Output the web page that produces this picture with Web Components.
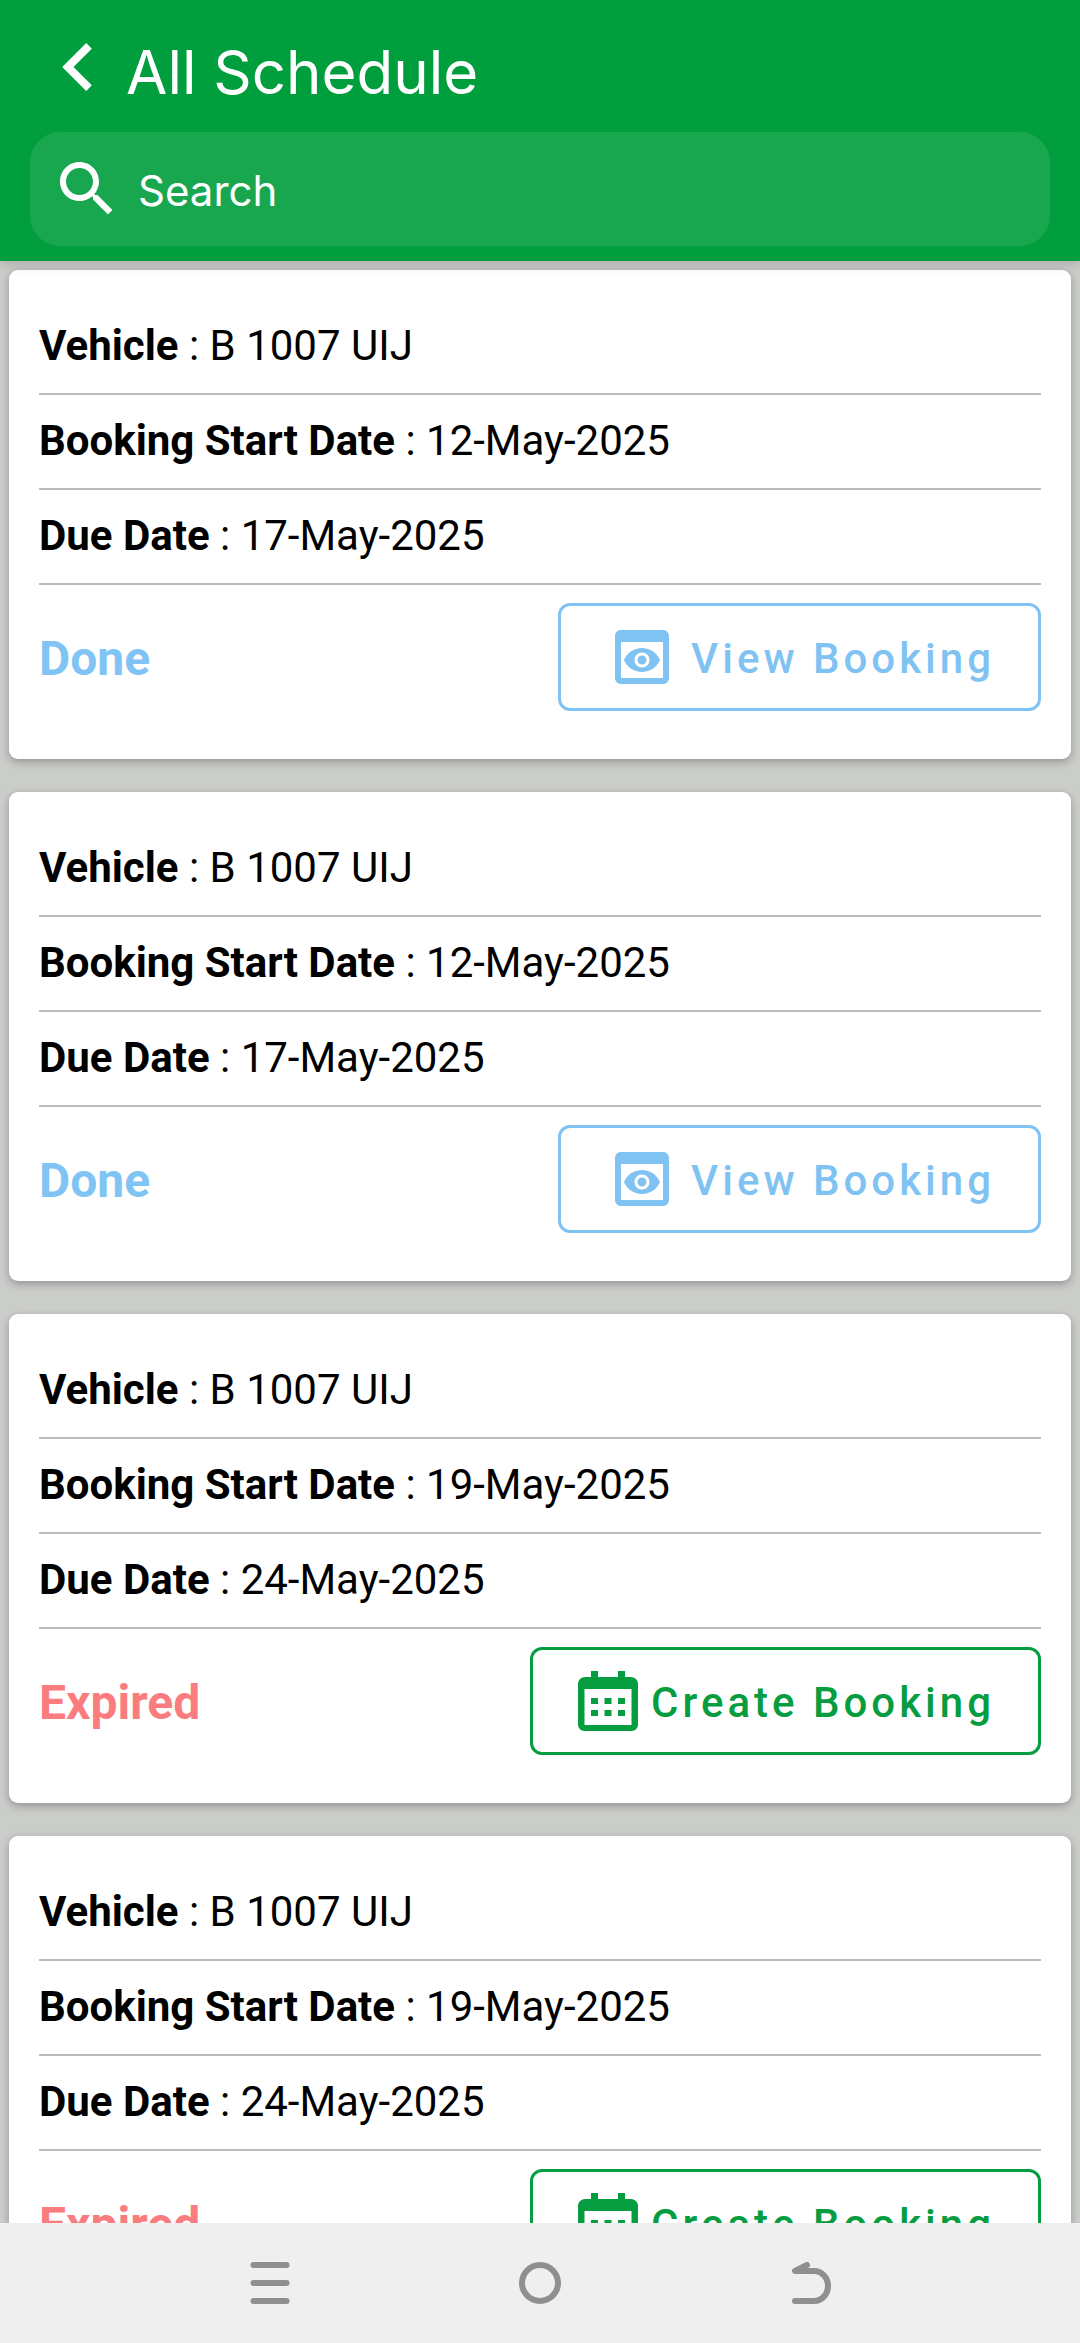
<!DOCTYPE html>
<html lang="en">
<head>
<meta charset="utf-8">
<meta name="viewport" content="width=device-width, initial-scale=1">
<title>All Schedule</title>
<style>
  html, body { margin: 0; height: 100%; }
  body { font-family: Roboto, "Liberation Sans", sans-serif; color: #000; }
</style>
</head>
<body>
<schedule-app>
  <app-header slot="header" heading="All Schedule"></app-header>
  <schedule-card status="done">
    <schedule-field label="Vehicle">B 1007 UIJ</schedule-field>
    <schedule-field label="Booking Start Date">12-May-2025</schedule-field>
    <schedule-field label="Due Date">17-May-2025</schedule-field>
  </schedule-card>
  <schedule-card status="done">
    <schedule-field label="Vehicle">B 1007 UIJ</schedule-field>
    <schedule-field label="Booking Start Date">12-May-2025</schedule-field>
    <schedule-field label="Due Date">17-May-2025</schedule-field>
  </schedule-card>
  <schedule-card status="expired">
    <schedule-field label="Vehicle">B 1007 UIJ</schedule-field>
    <schedule-field label="Booking Start Date">19-May-2025</schedule-field>
    <schedule-field label="Due Date">24-May-2025</schedule-field>
  </schedule-card>
  <schedule-card status="expired">
    <schedule-field label="Vehicle">B 1007 UIJ</schedule-field>
    <schedule-field label="Booking Start Date">19-May-2025</schedule-field>
    <schedule-field label="Due Date">24-May-2025</schedule-field>
  </schedule-card>
  <system-nav slot="nav"></system-nav>
</schedule-app>

<script>
const mount = (host, html) => {
  host.attachShadow({ mode: 'open' }).innerHTML = html;
};

customElements.define('schedule-app', class extends HTMLElement {
  constructor() {
    super();
    mount(this, `
      <style>
        :host { display: flex; flex-direction: column; height: 100vh; background: #cbcdca; }
        main {
          flex: 1; min-height: 0; overflow: hidden;
          display: flex; flex-direction: column; gap: 33px;
          padding: 9px 9px 0;
        }
      </style>
      <slot name="header"></slot>
      <main><slot></slot></main>
      <slot name="nav"></slot>`);
  }
});

customElements.define('app-header', class extends HTMLElement {
  constructor() {
    super();
    mount(this, `
      <style>
        :host {
          display: flex; flex-direction: column; flex: none; position: relative;
          padding: 36px 30px 15px; background: #009e3c; color: #fff;
          font-family: Inter, Roboto, sans-serif;
          box-shadow: 0 2px 12px rgba(0, 0, 0, .18);
        }
        .bar { display: flex; align-items: flex-start; padding: 0 32px; margin-bottom: 24px; gap: 34px; }
        button { border: 0; padding: 7px 0 0; background: none; color: inherit; display: flex; }
        .back svg { width: 30px; height: 48px; }
        h1 { margin: 0; font-size: 60px; line-height: 72px; font-weight: 400; }
        label {
          display: flex; align-items: center; gap: 15px; height: 114px;
          padding: 0 21px; border-radius: 30px; background: #18a64e; 
        }
        label svg { width: 72px; height: 72px; flex: none; }
        input {
          flex: 1; min-width: 0; border: 0; outline: 0; padding: 4px 0 0; background: none;
          font: 400 42px/54px Inter, Roboto, sans-serif; color: #fff;
        }
        input::placeholder { color: #fff; opacity: 1; }
      </style>
      <div class="bar">
        <button class="back" type="button" aria-label="Back">
          <svg viewBox="8 6 7.41 12" fill="currentColor"><path d="M15.41 16.59 10.83 12l4.58-4.59L14 6l-6 6 6 6z"/></svg>
        </button>
        <h1></h1>
      </div>
      <label for="q">
        <svg viewBox="0 0 24 24" fill="currentColor"><path d="M15.5 14h-.79l-.28-.27C15.41 12.59 16 11.11 16 9.5 16 5.91 13.09 3 9.5 3S3 5.91 3 9.5 5.91 16 9.5 16c1.61 0 3.09-.59 4.23-1.57l.27.28v.79l5 4.99L20.49 19l-4.99-5zm-6 0C7.01 14 5 11.99 5 9.5S7.01 5 9.5 5 14 7.01 14 9.5 11.99 14 9.5 14z"/></svg>
        <input id="q" type="text" placeholder="Search" aria-label="Search">
      </label>`);
  }
  connectedCallback() {
    this.shadowRoot.querySelector('h1').textContent = this.getAttribute('heading');
  }
});

customElements.define('schedule-field', class extends HTMLElement {
  constructor() {
    super();
    mount(this, `
      <style>
        :host {
          display: block; padding: 21px 0 22px; border-bottom: 2px solid #bbb;
          font-size: 42px; line-height: 50px; white-space: nowrap;
        }
        b { font-weight: 700; }
      </style>
      <b></b> : <slot></slot>`);
  }
  connectedCallback() {
    this.shadowRoot.querySelector('b').textContent = this.getAttribute('label');
  }
});

customElements.define('booking-button', class extends HTMLElement {
  constructor() {
    super();
    mount(this, `
      <style>
        :host { display: block; }
        button {
          display: flex; align-items: center; gap: 13px; height: 108px; box-sizing: border-box;
          padding: 0 43px 0 45px; border: 3px solid currentColor; border-radius: 12px;
          background: none; color: inherit; white-space: nowrap;
          font: 500 42px/50px Roboto, sans-serif; letter-spacing: 4px;
        }
        span { padding-top: 3px; }
        ::slotted(svg) { flex: none; }
      </style>
      <button type="button"><slot name="icon"></slot><span><slot></slot></span></button>`);
  }
});

const STATES = {
  done: {
    text: 'Done', color: '#7fc4f4', action: 'View Booking', actionColor: '#80c3f3',
    icon: `<svg slot="icon" width="72" height="72" viewBox="0 0 24 24" fill="currentColor"><path d="M19 3H5c-1.11 0-2 .9-2 2v14c0 1.1.89 2 2 2h14c1.1 0 2-.9 2-2V5c0-1.1-.89-2-2-2zm0 16H5V7h14v12zm-5.5-6c0 .83-.67 1.5-1.5 1.5s-1.5-.67-1.5-1.5.67-1.5 1.5-1.5 1.5.67 1.5 1.5zM12 9c-2.73 0-5.06 1.66-6 4 .94 2.34 3.27 4 6 4s5.06-1.66 6-4c-.94-2.34-3.27-4-6-4zm0 6.5c-1.38 0-2.5-1.12-2.5-2.5s1.12-2.5 2.5-2.5 2.5 1.12 2.5 2.5-1.12 2.5-2.5 2.5z"/></svg>`
  },
  expired: {
    text: 'Expired', color: '#fb7c7e', action: 'Create Booking', actionColor: '#069d40',
    icon: `<svg slot="icon" width="60" height="72" viewBox="0 -3 60 72" fill="currentColor"><path fill-rule="evenodd" d="M13 3h7v6h20V3h7v6h6a7 6.500 0 0 1 7 6.500V57a6.500 6 0 0 1-6.500 6H6.500A6.500 6 0 0 1 0 57V15.500A7 6.500 0 0 1 7 9h6zM6.500 21v36h47V21z"/><path d="M13 30h7v6h-7zM26.500 30h7v6h-7zM40 30h7v6h-7zM13 42h7v6h-7zM26.500 42h7v6h-7zM40 42h7v6h-7z"/></svg>`
  }
};

customElements.define('schedule-card', class extends HTMLElement {
  constructor() {
    super();
    const s = STATES[this.getAttribute('status')];
    mount(this, `
      <style>
        :host {
          display: block; flex: none; padding: 30px; border-radius: 9px; background: #fff;
          box-shadow: 0 3px 9px rgba(0, 0, 0, .28);
        }
        footer { display: flex; align-items: center; justify-content: space-between; padding: 18px 0; }
        strong { padding-top: 3px; font-size: 48px; line-height: 56px; font-weight: 700; color: ${s.color}; }
        booking-button { color: ${s.actionColor}; }
      </style>
      <slot></slot>
      <footer>
        <strong>${s.text}</strong>
        <booking-button>${s.icon}${s.action}</booking-button>
      </footer>`);
  }
});

customElements.define('system-nav', class extends HTMLElement {
  constructor() {
    super();
    mount(this, `
      <style>
        :host { display: block; flex: none; position: relative; background: #efefef; color: #8f8f8f; }
        nav { display: flex; padding: 0 12.5%; }
        button {
          flex: 1; height: 120px; padding: 0; border: 0; background: none; color: inherit;
          display: flex; align-items: center; justify-content: center;
        }
        svg { width: 42px; height: 42px; fill: none; stroke: currentColor; stroke-width: 6; stroke-linecap: round; stroke-linejoin: round; }
      </style>
      <nav>
        <button type="button" aria-label="Recent apps"><svg viewBox="0 0 42 42"><path d="M4.500 3h33M4.500 21h33M4.500 39h33"/></svg></button>
        <button type="button" aria-label="Home"><svg viewBox="0 0 42 42"><circle cx="21" cy="21" r="18"/></svg></button>
        <button type="button" aria-label="Back"><svg viewBox="0 0 42 42"><path d="M18 3L6 9h19a14 15 0 0 1 0 30H6"/></svg></button>
      </nav>`);
  }
});
</script>
</body>
</html>
